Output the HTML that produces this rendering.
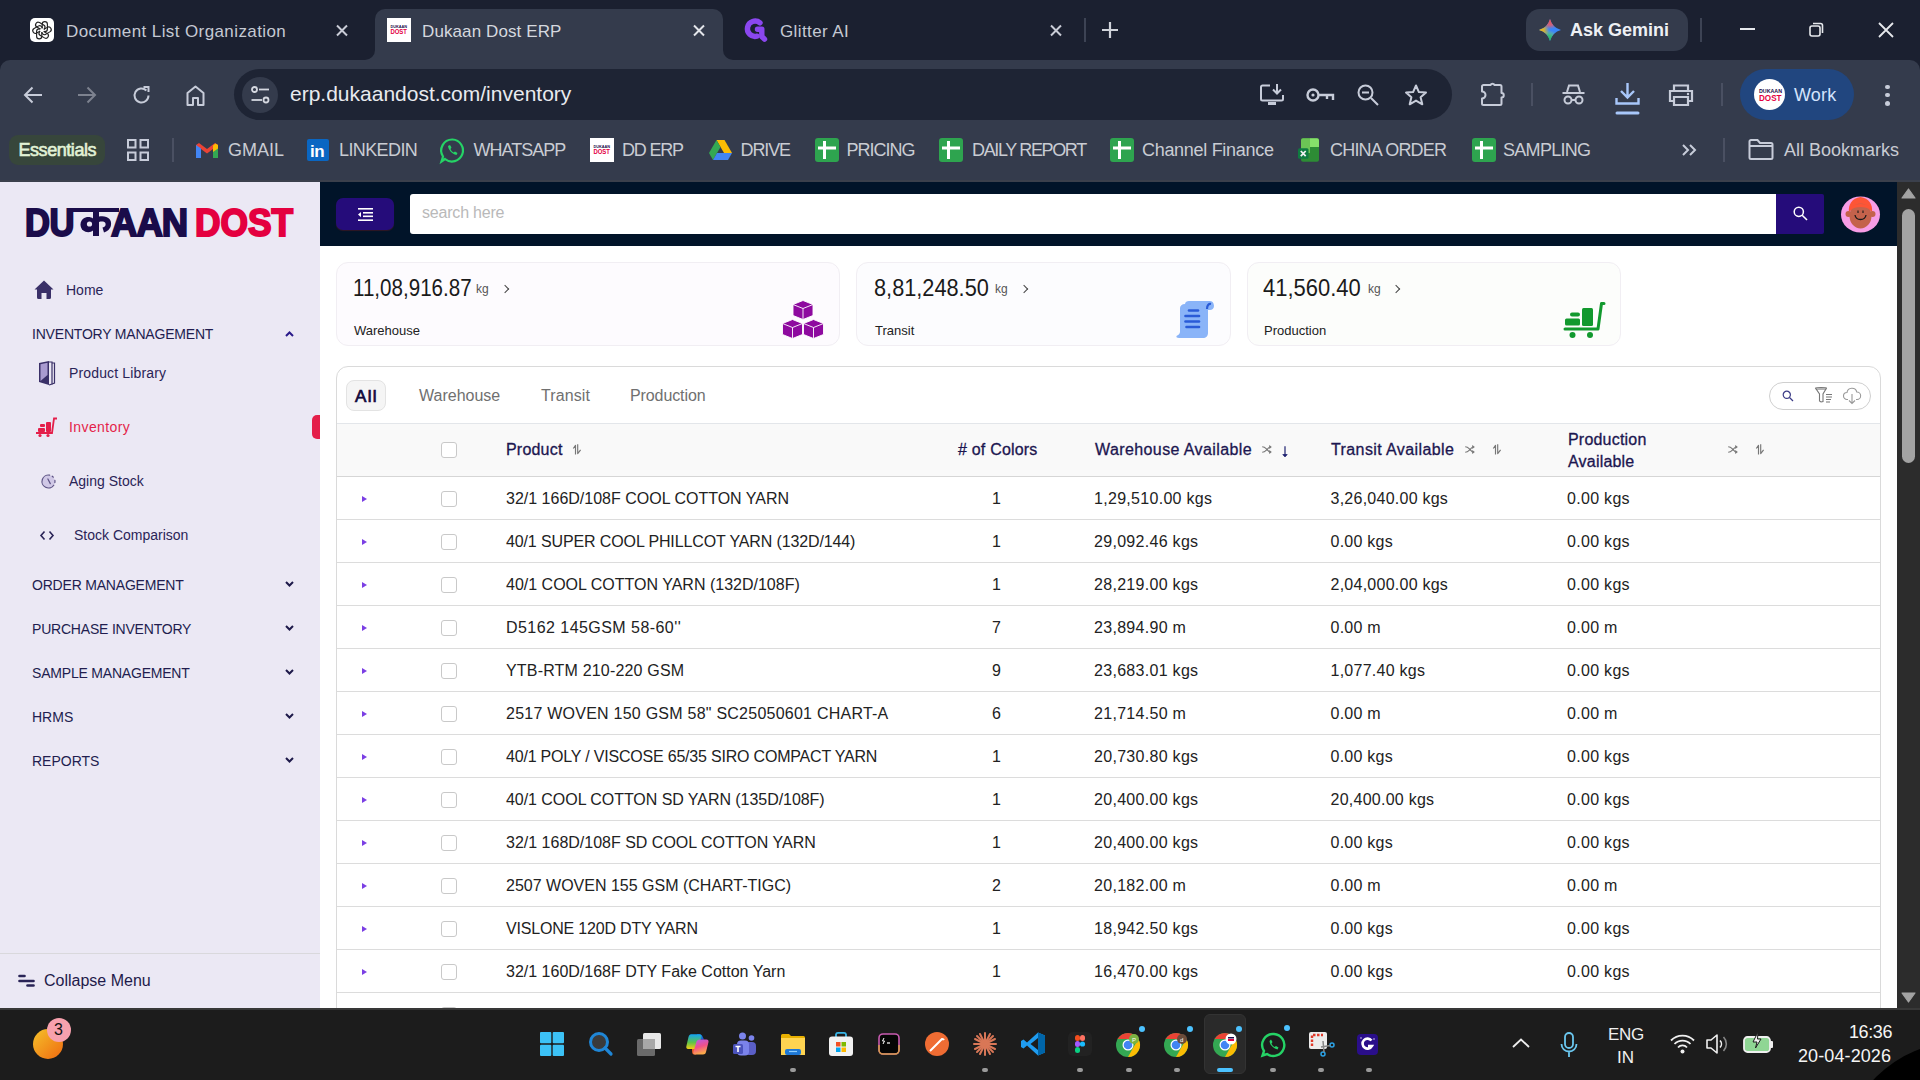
<!DOCTYPE html>
<html><head><meta charset="utf-8"><title>Dukaan Dost ERP</title>
<style>
*{box-sizing:border-box;margin:0;padding:0}
html,body{width:1920px;height:1080px;overflow:hidden;background:#1b2030;font-family:"Liberation Sans",sans-serif;position:relative}
.a{position:absolute}
.t{position:absolute;white-space:nowrap;line-height:1}
svg{position:absolute;overflow:visible}
.tab{color:#c5c9d3;font-size:17px;letter-spacing:0.4px}
.bm{color:#c9ccd3;font-size:18px;top:141px}
.sq{width:24px;height:24px;background:#2ea44f;border-radius:3px}
.nav{color:#2a2457;font-size:14px}
.sec{color:#221d4f;font-size:14px}
.chev{width:7px;height:7px;border-right:2px solid #1e1a4a;border-bottom:2px solid #1e1a4a;transform:rotate(45deg)}
.row{position:absolute;left:337px;width:1543px;height:43px;border-bottom:1px solid #dcdcdc;background:#fff}
.cell{position:absolute;top:14px;white-space:nowrap;line-height:1;font-size:16px;color:#222}
.cb{position:absolute;left:104px;top:14px;width:16px;height:16px;border:1px solid #c9c9c9;border-radius:3px;background:#fff}
.tri{position:absolute;left:25px;top:18.5px;width:0;height:0;border-left:5px solid #7b3fe4;border-top:3.5px solid transparent;border-bottom:3.5px solid transparent}
.th{position:absolute;white-space:nowrap;line-height:1;font-size:16px;color:#1c1650;-webkit-text-stroke:0.3px #1c1650;letter-spacing:0.2px}
.card{position:absolute;top:262px;height:84px;border:1px solid #f1eef3;border-radius:12px}
.num{position:absolute;top:277px;font-size:23px;color:#1a1a1a;white-space:nowrap;line-height:1}
.kg{position:absolute;top:283px;font-size:12px;color:#555;white-space:nowrap;line-height:1}
.lbl{position:absolute;top:324px;font-size:13px;color:#222;white-space:nowrap;line-height:1}
.arr{position:absolute;top:286px;width:6px;height:6px;border-right:1.6px solid #444;border-top:1.6px solid #444;transform:rotate(45deg)}
.tb{position:absolute;top:1032px;width:24px;height:24px}
.dot{position:absolute;top:1068px;width:6px;height:4px;border-radius:2px;background:#9a9a9a}
</style></head><body>

<!-- ================= BROWSER TAB STRIP ================= -->
<div class="a" style="left:0;top:0;width:1920px;height:60px;background:#1b2030"></div>
<!-- active tab -->
<div class="a" style="left:375px;top:9px;width:348px;height:52px;background:#343b4c;border-radius:10px 10px 0 0"></div>
<div class="a" style="left:365px;top:50px;width:10px;height:10px;background:#343b4c"></div>
<div class="a" style="left:355px;top:40px;width:20px;height:20px;background:#1b2030;border-radius:0 0 10px 0"></div>
<div class="a" style="left:723px;top:50px;width:10px;height:10px;background:#343b4c"></div>
<div class="a" style="left:723px;top:40px;width:20px;height:20px;background:#1b2030;border-radius:0 0 0 10px"></div>

<!-- tab 1 -->
<div class="a" style="left:30px;top:18px;width:24px;height:24px;background:#fff;border-radius:5px"></div>
<svg style="left:30px;top:18px" width="24" height="24" viewBox="0 0 24 24"><g transform="translate(12 12.2)" fill="none" stroke="#222" stroke-width="1.15"><rect x="0.2" y="-8.6" width="5.2" height="10" rx="2.6" transform="rotate(0)"/><rect x="0.2" y="-8.6" width="5.2" height="10" rx="2.6" transform="rotate(60)"/><rect x="0.2" y="-8.6" width="5.2" height="10" rx="2.6" transform="rotate(120)"/><rect x="0.2" y="-8.6" width="5.2" height="10" rx="2.6" transform="rotate(180)"/><rect x="0.2" y="-8.6" width="5.2" height="10" rx="2.6" transform="rotate(240)"/><rect x="0.2" y="-8.6" width="5.2" height="10" rx="2.6" transform="rotate(300)"/></g><circle cx="12" cy="12.2" r="2" fill="#fff"/></svg>
<div class="t tab" style="left:66px;top:23px">Document List Organization</div>
<svg style="left:336px;top:25px" width="12" height="11" viewBox="0 0 12 11"><path d="M1 0.5L11 10.5M11 0.5L1 10.5" stroke="#c9ccd6" stroke-width="2"/></svg>

<!-- tab 2 -->
<svg style="left:387px;top:18px" width="24" height="24" viewBox="0 0 24 24"><rect width="24" height="24" fill="#fff"/><text x="3.4" y="10.3" font-family="Liberation Sans" font-weight="bold" font-size="3.4" textLength="16.6" lengthAdjust="spacingAndGlyphs" fill="#1a0c4a">DUKAAN</text><text x="3.4" y="16.1" font-family="Liberation Sans" font-weight="bold" font-size="7" textLength="16.6" lengthAdjust="spacingAndGlyphs" fill="#e4003f">DOST</text></svg>
<div class="t tab" style="left:422px;top:23px;color:#d5d8df;letter-spacing:0.1px">Dukaan Dost ERP</div>
<svg style="left:693px;top:25px" width="12" height="11" viewBox="0 0 12 11"><path d="M1 0.5L11 10.5M11 0.5L1 10.5" stroke="#e3e5ea" stroke-width="2"/></svg>

<!-- tab 3 -->
<svg style="left:745px;top:18px" width="24" height="26" viewBox="0 0 24 26"><g fill="none" stroke="#8b47ef" stroke-width="5.4" stroke-linecap="round" stroke-linejoin="round"><path d="M15 4.8A7.7 7.7 0 1 0 12 18.2"/><path d="M12.5 11.2H16.8V18.5L19.5 21.2"/></g></svg>
<div class="t tab" style="left:780px;top:23px">Glitter AI</div>
<svg style="left:1050px;top:25px" width="12" height="11" viewBox="0 0 12 11"><path d="M1 0.5L11 10.5M11 0.5L1 10.5" stroke="#c9ccd6" stroke-width="2"/></svg>
<div class="a" style="left:1084px;top:18px;width:2px;height:24px;background:#3d4354"></div>
<svg style="left:1102px;top:22px" width="16" height="16" viewBox="0 0 16 16"><path d="M8 0V16M0 8H16" stroke="#d0d3da" stroke-width="2.2"/></svg>

<!-- Ask Gemini -->
<div class="a" style="left:1526px;top:9px;width:162px;height:42px;background:#343b4c;border-radius:14px"></div>
<svg style="left:1539px;top:19px" width="22" height="22" viewBox="0 0 24 24"><defs><radialGradient id="gr" cx="12" cy="0" r="11" gradientUnits="userSpaceOnUse"><stop offset="0" stop-color="#f44b4b"/><stop offset="0.6" stop-color="#f25a5a" stop-opacity="0.8"/><stop offset="1" stop-color="#f25a5a" stop-opacity="0"/></radialGradient><radialGradient id="gy" cx="0" cy="12" r="11" gradientUnits="userSpaceOnUse"><stop offset="0" stop-color="#fbbc04"/><stop offset="0.5" stop-color="#fbbc04" stop-opacity="0.8"/><stop offset="1" stop-color="#fbbc04" stop-opacity="0"/></radialGradient><radialGradient id="gn" cx="10" cy="24" r="12" gradientUnits="userSpaceOnUse"><stop offset="0" stop-color="#1eb35a"/><stop offset="0.5" stop-color="#34c759" stop-opacity="0.8"/><stop offset="1" stop-color="#a8e05a" stop-opacity="0"/></radialGradient></defs><path id="gst" d="M12 0Q14.6 9.4 24 12Q14.6 14.6 12 24Q9.4 14.6 0 12Q9.4 9.4 12 0Z" fill="#3b86f7"/><path d="M12 0Q14.6 9.4 24 12Q14.6 14.6 12 24Q9.4 14.6 0 12Q9.4 9.4 12 0Z" fill="url(#gn)"/><path d="M12 0Q14.6 9.4 24 12Q14.6 14.6 12 24Q9.4 14.6 0 12Q9.4 9.4 12 0Z" fill="url(#gy)"/><path d="M12 0Q14.6 9.4 24 12Q14.6 14.6 12 24Q9.4 14.6 0 12Q9.4 9.4 12 0Z" fill="url(#gr)"/></svg>
<div class="t" style="left:1570px;top:20.5px;font-size:18px;font-weight:bold;color:#eef0f4">Ask Gemini</div>
<div class="a" style="left:1700px;top:18px;width:2px;height:24px;background:#3d4354"></div>
<!-- window controls -->
<div class="a" style="left:1740px;top:28px;width:15px;height:2px;background:#e6e8ec"></div>
<svg style="left:1809px;top:22px" width="15" height="15" viewBox="0 0 15 15"><rect x="1" y="4" width="10" height="10" rx="2" fill="none" stroke="#e6e8ec" stroke-width="1.6"/><path d="M4 1.5H11.5A2 2 0 0 1 13.5 3.5V11" fill="none" stroke="#e6e8ec" stroke-width="1.6"/></svg>
<svg style="left:1878px;top:22px" width="16" height="16" viewBox="0 0 16 16"><path d="M1 1L15 15M15 1L1 15" stroke="#e6e8ec" stroke-width="1.8"/></svg>

<!-- ================= TOOLBAR ================= -->
<div class="a" style="left:0;top:60px;width:1920px;height:121px;background:#343b4c;border-radius:10px 10px 0 0"></div>
<div class="a" style="left:0;top:180px;width:1920px;height:2px;background:#3b404c"></div>
<!-- nav icons -->
<svg style="left:23px;top:86px" width="20" height="18" viewBox="0 0 20 18"><path d="M19 9H2M9.5 1.5L2 9L9.5 16.5" fill="none" stroke="#c7ccd9" stroke-width="2"/></svg>
<svg style="left:77px;top:86px" width="20" height="18" viewBox="0 0 20 18"><path d="M1 9H18M10.5 1.5L18 9L10.5 16.5" fill="none" stroke="#7d828f" stroke-width="2"/></svg>
<svg style="left:132px;top:86px" width="19" height="19" viewBox="0 0 19 19"><path d="M16.5 9.5A7 7 0 1 1 14.4 4.5" fill="none" stroke="#c7ccd9" stroke-width="2"/><path d="M11.5 1H16.5V6" fill="none" stroke="#c7ccd9" stroke-width="2"/></svg>
<svg style="left:186px;top:85px" width="19" height="21" viewBox="0 0 19 21"><path d="M1.5 20V8L9.5 1.5L17.5 8V20H12V13H7V20Z" fill="none" stroke="#c7ccd9" stroke-width="2" stroke-linejoin="round"/></svg>
<!-- url bar -->
<div class="a" style="left:234px;top:69px;width:1218px;height:51px;background:#1e2434;border-radius:26px"></div>
<div class="a" style="left:242px;top:77px;width:36px;height:36px;background:#343b4c;border-radius:18px"></div>
<svg style="left:251px;top:86px" width="19" height="18" viewBox="0 0 19 18"><g fill="none" stroke="#d5d8e0" stroke-width="1.8"><circle cx="3.5" cy="3.5" r="2.5"/><path d="M8 3.5H18"/><circle cx="15" cy="14" r="2.5"/><path d="M0.5 14H11"/></g></svg>
<div class="t" style="left:290px;top:83px;font-size:21px;color:#e9ebef">erp.dukaandost.com/inventory</div>
<!-- right icons in url bar -->
<svg style="left:1260px;top:84px" width="24" height="22" viewBox="0 0 24 22"><path d="M10 1.5H2.5A1.5 1.5 0 0 0 1 3V15A1.5 1.5 0 0 0 2.5 16.5H21.5A1.5 1.5 0 0 0 23 15V11" fill="none" stroke="#c7ccd9" stroke-width="2"/><path d="M17 0V9M13 5.5L17 9.5L21 5.5" fill="none" stroke="#c7ccd9" stroke-width="2"/><path d="M8 19.5H16" stroke="#c7ccd9" stroke-width="3"/></svg>
<svg style="left:1306px;top:86px" width="28" height="18" viewBox="0 0 28 18"><circle cx="7" cy="9" r="5.5" fill="none" stroke="#c7ccd9" stroke-width="2.4"/><circle cx="7" cy="9" r="1.6" fill="#c7ccd9"/><path d="M12.5 9H27V14M21 9V13" fill="none" stroke="#c7ccd9" stroke-width="2.4"/></svg>
<svg style="left:1357px;top:84px" width="22" height="22" viewBox="0 0 22 22"><circle cx="8.5" cy="8.5" r="7" fill="none" stroke="#c7ccd9" stroke-width="2"/><path d="M14 14L21 21M5 8.5H12" stroke="#c7ccd9" stroke-width="2"/></svg>
<svg style="left:1404px;top:84px" width="24" height="22" viewBox="0 0 24 22"><path d="M12 1.5L14.9 8.1L22 8.6L16.6 13.3L18.3 20.3L12 16.6L5.7 20.3L7.4 13.3L2 8.6L9.1 8.1Z" fill="none" stroke="#c7ccd9" stroke-width="2" stroke-linejoin="round"/></svg>
<!-- toolbar right -->
<svg style="left:1481px;top:81px" width="25" height="26" viewBox="0 0 25 26"><path d="M2.5 4H9.5A2.2 2.2 0 0 1 13.5 4H19A1.5 1.5 0 0 1 20.5 5.5V12A2.2 2.2 0 0 1 20.5 16.5V22.5A1.5 1.5 0 0 1 19 24H2.5A1.5 1.5 0 0 1 1 22.5V17.5A3.5 3.5 0 0 0 1 10.5V5.5A1.5 1.5 0 0 1 2.5 4Z" fill="none" stroke="#c7ccd9" stroke-width="2" stroke-linejoin="round"/></svg>
<div class="a" style="left:1531px;top:83px;width:2px;height:23px;background:#4a5062"></div>
<svg style="left:1562px;top:84px" width="23" height="21" viewBox="0 0 23 21"><g fill="none" stroke="#c7ccd9" stroke-width="2"><path d="M5 8L7 1.5H16L18 8"/><path d="M0.5 9H22.5"/><circle cx="6" cy="16" r="3.5"/><circle cx="17" cy="16" r="3.5"/><path d="M9.5 16H13.5"/></g></svg>
<svg style="left:1615px;top:82px" width="25" height="34" viewBox="0 0 25 34"><g fill="none" stroke="#a8c7fa" stroke-width="2.4"><path d="M12.5 1V15M6 9L12.5 15.5L19 9"/><path d="M1.5 16V21.5H23.5V16"/></g><path d="M2 31H23" stroke="#a8c7fa" stroke-width="3" stroke-linecap="round"/></svg>
<svg style="left:1668px;top:84px" width="26" height="22" viewBox="0 0 26 22"><g fill="none" stroke="#c7ccd9" stroke-width="2.2"><path d="M6 6V1.5H20V6"/><path d="M6 17H2V7H24V17H20"/><path d="M6 13H20V21H6Z"/></g><circle cx="20" cy="10" r="1.2" fill="#c7ccd9"/></svg>
<div class="a" style="left:1721px;top:83px;width:2px;height:23px;background:#4a5062"></div>
<!-- work pill -->
<div class="a" style="left:1740px;top:69px;width:114px;height:51px;background:#21467f;border-radius:26px"></div>
<svg style="left:1754px;top:79px" width="31" height="31" viewBox="0 0 31 31"><circle cx="15.5" cy="15.5" r="15.5" fill="#fff"/><text x="5" y="14" font-family="Liberation Sans" font-weight="bold" font-size="4.6" textLength="23" lengthAdjust="spacingAndGlyphs" fill="#1a0c4a">DUKAAN</text><text x="5" y="21.8" font-family="Liberation Sans" font-weight="bold" font-size="9" textLength="22.5" lengthAdjust="spacingAndGlyphs" fill="#e4003f">DOST</text></svg>
<div class="t" style="left:1794px;top:85.5px;font-size:18px;color:#d3e3fd;letter-spacing:0.2px">Work</div>
<div class="a" style="left:1885px;top:84.5px;width:4.5px;height:4.5px;background:#c7ccd9;border-radius:3px"></div>
<div class="a" style="left:1885px;top:92.8px;width:4.5px;height:4.5px;background:#c7ccd9;border-radius:3px"></div>
<div class="a" style="left:1885px;top:101.1px;width:4.5px;height:4.5px;background:#c7ccd9;border-radius:3px"></div>

<!-- ================= BOOKMARKS ================= -->
<div class="a" style="left:9px;top:135px;width:96px;height:30px;background:#37463b;border-radius:9px"></div>
<div class="t" style="left:18.5px;top:140.5px;font-size:18px;color:#e2f2d6;-webkit-text-stroke:0.6px #e2f2d6;letter-spacing:-0.45px">Essentials</div>
<svg style="left:127px;top:139px" width="22" height="22" viewBox="0 0 22 22"><g fill="none" stroke="#c7ccd9" stroke-width="2"><rect x="1" y="1" width="7.5" height="7.5"/><rect x="13.5" y="1" width="7.5" height="7.5"/><rect x="1" y="13.5" width="7.5" height="7.5"/><rect x="13.5" y="13.5" width="7.5" height="7.5"/></g></svg>
<div class="a" style="left:172px;top:138px;width:2px;height:24px;background:#4a5062"></div>
<!-- gmail -->
<svg style="left:196px;top:142px" width="22" height="17" viewBox="0 0 22 17"><path d="M0 3V16H5V7L11 11.5L17 7V16H22V3L19 1L11 7L3 1Z" fill="#ea4335"/><path d="M0 3V16H5V6.5Z" fill="#4285f4"/><path d="M22 3V16H17V6.5Z" fill="#34a853"/><path d="M17 3.5L19.5 1.5L22 3V6.5L17 10Z" fill="#fbbc04"/></svg>
<div class="t bm" style="left:228px;letter-spacing:0px">GMAIL</div>
<div class="a" style="left:307px;top:139px;width:22px;height:22px;background:#0a66c2;border-radius:2px"></div>
<div class="t" style="left:310px;top:143px;font-size:17px;font-weight:bold;color:#fff;letter-spacing:-0.5px">in</div>
<div class="t bm" style="left:339px;letter-spacing:-0.6px">LINKEDIN</div>
<svg style="left:440px;top:138px" width="25" height="25" viewBox="0 0 25 25"><path d="M12.5 1.5A11 11 0 1 1 5 21L1.5 23.5L3 18.5A11 11 0 0 1 12.5 1.5Z" fill="none" stroke="#25d366" stroke-width="2.2"/><path d="M8 8C8.5 12 12 16 16.5 17L17.5 15L15 13.5L13.5 14.5C12 13.5 11 12.5 10.5 11L11.5 9.5L10 7L8 8Z" fill="#25d366"/></svg>
<div class="t bm" style="left:473.5px;letter-spacing:-1px">WHATSAPP</div>
<svg style="left:590px;top:138px" width="24" height="24" viewBox="0 0 24 24"><rect width="24" height="24" fill="#fff"/><text x="3.4" y="10.3" font-family="Liberation Sans" font-weight="bold" font-size="3.4" textLength="16.6" lengthAdjust="spacingAndGlyphs" fill="#1a0c4a">DUKAAN</text><text x="3.4" y="16.1" font-family="Liberation Sans" font-weight="bold" font-size="7" textLength="16.6" lengthAdjust="spacingAndGlyphs" fill="#e4003f">DOST</text></svg>
<div class="t bm" style="left:622px;letter-spacing:-1.2px">DD ERP</div>
<svg style="left:709px;top:140px" width="23" height="20" viewBox="0 0 23 20"><path d="M7.5 0H15.5L23 13H15Z" fill="#fbbc04"/><path d="M7.5 0L0 13L4 20L11.5 7Z" fill="#34a853"/><path d="M4 20H19L23 13H8Z" fill="#4285f4"/></svg>
<div class="t bm" style="left:740.5px;letter-spacing:-1.1px">DRIVE</div>
<div class="a sq" style="left:815px;top:138px"></div><svg style="left:815px;top:138px" width="24" height="24" viewBox="0 0 24 24"><path d="M9.5 3V21M3 10H21" stroke="#fff" stroke-width="3"/></svg>
<div class="t bm" style="left:846.5px;letter-spacing:-1px">PRICING</div>
<div class="a sq" style="left:939px;top:138px"></div><svg style="left:939px;top:138px" width="24" height="24" viewBox="0 0 24 24"><path d="M9.5 3V21M3 10H21" stroke="#fff" stroke-width="3"/></svg>
<div class="t bm" style="left:972px;letter-spacing:-1.35px">DAILY REPORT</div>
<div class="a sq" style="left:1110px;top:138px"></div><svg style="left:1110px;top:138px" width="24" height="24" viewBox="0 0 24 24"><path d="M9.5 3V21M3 10H21" stroke="#fff" stroke-width="3"/></svg>
<div class="t bm" style="left:1142px;letter-spacing:-0.3px">Channel Finance</div>
<svg style="left:1297px;top:138px" width="24" height="24" viewBox="0 0 24 24"><rect x="4" y="0.2" width="18" height="23.5" rx="2" fill="#2d8c35"/><path d="M6 0.2H13V15H4V2.2A2 2 0 0 1 6 0.2Z" fill="#6cc455"/><path d="M13 0.2H20A2 2 0 0 1 22 2.2V9H13Z" fill="#86e06a"/><rect x="1" y="10.3" width="10.5" height="10.5" rx="1.5" fill="#0f7b40"/><path d="M3.8 13L8.7 18.2M8.7 13L3.8 18.2" stroke="#f0f0f0" stroke-width="1.8"/></svg>
<div class="t bm" style="left:1330px;letter-spacing:-0.8px">CHINA ORDER</div>
<div class="a sq" style="left:1472px;top:138px"></div><svg style="left:1472px;top:138px" width="24" height="24" viewBox="0 0 24 24"><path d="M9.5 3V21M3 10H21" stroke="#fff" stroke-width="3"/></svg>
<div class="t bm" style="left:1503px;letter-spacing:-0.7px">SAMPLING</div>
<svg style="left:1682px;top:144px" width="14" height="12" viewBox="0 0 14 12"><path d="M1 1L6 6L1 11M8 1L13 6L8 11" fill="none" stroke="#c7ccd9" stroke-width="2"/></svg>
<div class="a" style="left:1723px;top:138px;width:2px;height:24px;background:#4a5062"></div>
<svg style="left:1748px;top:139px" width="26" height="21" viewBox="0 0 26 21"><path d="M1.5 2.5A1.5 1.5 0 0 1 3 1H9.5L12 4H23A1.5 1.5 0 0 1 24.5 5.5V18.5A1.5 1.5 0 0 1 23 20H3A1.5 1.5 0 0 1 1.5 18.5Z" fill="none" stroke="#c7ccd9" stroke-width="2"/><path d="M1.5 7H24.5" stroke="#c7ccd9" stroke-width="2"/></svg>
<div class="t bm" style="left:1784px;letter-spacing:0px">All Bookmarks</div>

<!-- ================= SIDEBAR ================= -->
<div class="a" style="left:0;top:182px;width:320px;height:826px;background:#ebe8f4"></div>
<!-- logo -->
<div class="t" style="left:25px;top:203.5px;font-size:38.4px;font-weight:bold;color:#1a0c4a;transform:scaleX(0.9);transform-origin:0 0;-webkit-text-stroke:2px #1a0c4a;letter-spacing:-0.5px">DU</div>
<svg style="left:69px;top:208px" width="50" height="28" viewBox="0 0 50 28"><g fill="#1a0c4a"><rect x="0" y="0" width="50" height="4"/><rect x="24" y="0" width="6" height="28"/><path d="M24 10.5C21 8 12 8 11.5 16.5C11.5 24 20 26 24 22.5Z"/><path d="M30 8.5C38 7 43 11 42 17C41.5 21 38 23.5 35 24.5L33.5 19.5C36 19 37 17.5 36.5 15.5C36 13.5 33 13 30 14Z"/></g><circle cx="20.5" cy="16" r="2.6" fill="#ebe8f4"/></svg>
<div class="t" style="left:111px;top:203.5px;font-size:38.4px;font-weight:bold;color:#1a0c4a;transform:scaleX(0.95);transform-origin:0 0;-webkit-text-stroke:2px #1a0c4a;letter-spacing:-1px">AAN</div>
<div class="t" style="left:195px;top:203.5px;font-size:38.4px;font-weight:bold;color:#e4003f;transform:scaleX(0.92);transform-origin:0 0;-webkit-text-stroke:2px #e4003f;letter-spacing:0px">DOST</div>

<!-- home -->
<svg style="left:34px;top:280px" width="20" height="19" viewBox="0 0 20 19"><path d="M10 0.5L19.5 9.5H17V17.5A1.5 1.5 0 0 1 15.5 19H12.5V13H7.5V19H4.5A1.5 1.5 0 0 1 3 17.5V9.5H0.5Z" fill="#3a3068"/></svg>
<div class="t nav" style="left:66px;top:283px">Home</div>
<div class="t sec" style="left:32px;top:327px;letter-spacing:-0.2px">INVENTORY MANAGEMENT</div>
<svg style="left:285px;top:331px" width="9" height="6" viewBox="0 0 9 6"><path d="M1 5L4.5 1.5L8 5" fill="none" stroke="#2a1a8a" stroke-width="2"/></svg>
<!-- product library -->
<svg style="left:38px;top:361px" width="18" height="25" viewBox="0 0 18 25"><path d="M1 2L11 0V24L1 21Z" fill="#3a3068"/><path d="M2.5 3.2L9.5 1.8V14L2.5 20Z" fill="#a99bd0"/><path d="M11 1H14V23L11 24" fill="none" stroke="#3a3068" stroke-width="1.2"/><path d="M14 2H16.5V22L14 23" fill="none" stroke="#3a3068" stroke-width="1.2"/></svg>
<div class="t nav" style="left:69px;top:366px;letter-spacing:0.15px">Product Library</div>
<!-- inventory active -->
<svg style="left:36px;top:417px" width="21" height="20" viewBox="0 0 21 20"><g fill="#e41f4a"><rect x="4" y="7" width="5" height="3" rx="1"/><rect x="2" y="11" width="7" height="4" rx="1"/><rect x="10" y="5" width="5" height="10" rx="1"/><path d="M0 16H16L18 1.5H21" fill="none" stroke="#e41f4a" stroke-width="1.8"/><circle cx="4" cy="18.5" r="1.6"/><circle cx="12" cy="18.5" r="1.6"/></g></svg>
<div class="t nav" style="left:69px;top:420px;color:#e41f4a;letter-spacing:0.4px">Inventory</div>
<div class="a" style="left:312px;top:415px;width:8px;height:24px;background:#e41f4a;border-radius:5px 0 0 5px"></div>
<!-- aging stock -->
<svg style="left:41px;top:474px" width="15" height="15" viewBox="0 0 15 15"><circle cx="7.5" cy="7.5" r="6.3" fill="#d0c8e6"/><g fill="none" stroke="#5c5284" stroke-width="1.2" stroke-linecap="round"><path d="M8.63 1.1A6.5 6.5 0 1 0 12.82 11.23"/><path d="M11.23 2.18A6.5 6.5 0 0 1 12.3 3.2"/><path d="M13.9 6.37A6.5 6.5 0 0 1 13.85 8.7"/><path d="M6.9 5L9.3 9.6"/></g></svg>
<div class="t nav" style="left:69px;top:474px">Aging Stock</div>
<svg style="left:40px;top:531px" width="14" height="9" viewBox="0 0 14 9"><path d="M4.5 0.5L1 4.5L4.5 8.5M9.5 0.5L13 4.5L9.5 8.5" fill="none" stroke="#2a2457" stroke-width="1.6"/></svg>
<div class="t nav" style="left:74px;top:528px">Stock Comparison</div>

<div class="t sec" style="left:32px;top:578px;letter-spacing:-0.2px">ORDER MANAGEMENT</div>
<svg style="left:285px;top:581px" width="9" height="6" viewBox="0 0 9 6"><path d="M1 1L4.5 4.5L8 1" fill="none" stroke="#1e1a4a" stroke-width="2"/></svg>
<div class="t sec" style="left:32px;top:622px;letter-spacing:-0.2px">PURCHASE INVENTORY</div>
<svg style="left:285px;top:625px" width="9" height="6" viewBox="0 0 9 6"><path d="M1 1L4.5 4.5L8 1" fill="none" stroke="#1e1a4a" stroke-width="2"/></svg>
<div class="t sec" style="left:32px;top:666px;letter-spacing:-0.2px">SAMPLE MANAGEMENT</div>
<svg style="left:285px;top:669px" width="9" height="6" viewBox="0 0 9 6"><path d="M1 1L4.5 4.5L8 1" fill="none" stroke="#1e1a4a" stroke-width="2"/></svg>
<div class="t sec" style="left:32px;top:710px">HRMS</div>
<svg style="left:285px;top:713px" width="9" height="6" viewBox="0 0 9 6"><path d="M1 1L4.5 4.5L8 1" fill="none" stroke="#1e1a4a" stroke-width="2"/></svg>
<div class="t sec" style="left:32px;top:754px">REPORTS</div>
<svg style="left:285px;top:757px" width="9" height="6" viewBox="0 0 9 6"><path d="M1 1L4.5 4.5L8 1" fill="none" stroke="#1e1a4a" stroke-width="2"/></svg>

<div class="a" style="left:0;top:953px;width:320px;height:1px;background:#d9d8dc"></div>
<svg style="left:18px;top:974px" width="17" height="13" viewBox="0 0 17 13"><g stroke="#2a2457" stroke-width="2.6" stroke-linecap="round"><path d="M1.5 2H6.5"/><path d="M1.5 7H15.5"/><path d="M9.5 11.5H15.5"/></g></svg>
<div class="t" style="left:44px;top:973px;font-size:16px;color:#1e1a4a">Collapse Menu</div>

<!-- ================= APP HEADER ================= -->
<div class="a" style="left:320px;top:182px;width:1577px;height:64px;background:#011429"></div>
<div class="a" style="left:336px;top:198px;width:58px;height:32px;background:#250c7a;border-radius:7px;box-shadow:0 1px 1px rgba(120,30,30,0.4)"></div>
<svg style="left:358px;top:208px" width="15" height="13" viewBox="0 0 15 13"><g fill="#fff"><rect x="0" y="0" width="15" height="1.6"/><rect x="5" y="4" width="10" height="1.6"/><rect x="5" y="7.5" width="10" height="1.6"/><rect x="0" y="11.4" width="15" height="1.6"/><path d="M0 6.6L3 4V9.2Z"/></g></svg>
<div class="a" style="left:410px;top:194px;width:1366px;height:40px;background:#fff;border-radius:3px 0 0 3px"></div>
<div class="t" style="left:422px;top:205px;font-size:16px;color:#b9b9b9;letter-spacing:-0.2px">search here</div>
<div class="a" style="left:1776px;top:194px;width:48px;height:40px;background:#250c7a;border-radius:0 2px 2px 0"></div>
<svg style="left:1793px;top:206px" width="15" height="15" viewBox="0 0 15 15"><circle cx="5.8" cy="5.8" r="4.6" fill="none" stroke="#fff" stroke-width="1.5"/><path d="M9.2 9.2L14 14" stroke="#fff" stroke-width="1.6"/></svg>
<!-- avatar -->
<svg style="left:1841px;top:196px" width="39" height="37" viewBox="0 0 39 37"><ellipse cx="19.5" cy="18.5" rx="19.5" ry="18" fill="#f79de6"/><path d="M8 16C7 9 11 2 19.5 1C28 2 32 9 31 16C29 12 10 12 8 16Z" fill="#fd5536"/><ellipse cx="19.5" cy="20" rx="11" ry="12.5" fill="#c4624b"/><path d="M10 11C13 7 26 7 29 11L29 14C26 10 13 10 10 14Z" fill="#fd5536"/><circle cx="7.5" cy="18" r="3" fill="#c4624b"/><circle cx="31.5" cy="18" r="3" fill="#c4624b"/><path d="M14 19C15 25 24 25 25 19" fill="none" stroke="#1a1a1a" stroke-width="1.3"/><path d="M17 14.5V17M22 14.5V17" stroke="#1a1a1a" stroke-width="1.1"/></svg>

<!-- scrollbar -->
<div class="a" style="left:1897px;top:182px;width:23px;height:826px;background:#2c2c2c"></div>
<svg style="left:1901px;top:188px" width="15" height="11" viewBox="0 0 15 11"><path d="M7.5 1L14 10H1Z" fill="#a3a3a3" stroke="#a3a3a3" stroke-width="1.2" stroke-linejoin="round"/></svg>
<div class="a" style="left:1902px;top:209px;width:13px;height:254px;background:#a3a3a3;border-radius:7px"></div>
<svg style="left:1901px;top:992px" width="15" height="11" viewBox="0 0 15 11"><path d="M7.5 10L14 1H1Z" fill="#a3a3a3" stroke="#a3a3a3" stroke-width="1.2" stroke-linejoin="round"/></svg>

<!-- ================= CONTENT ================= -->
<div class="a" style="left:320px;top:246px;width:1577px;height:762px;background:#fff"></div>

<!-- cards -->
<div class="card" style="left:336px;width:504px;background:#fdfbfe"></div>
<div class="t num" style="left:353px;transform:scaleX(0.895);transform-origin:0 0">11,08,916.87</div>
<div class="t kg" style="left:476px">kg</div>
<div class="arr" style="left:502px"></div>
<div class="t lbl" style="left:354px">Warehouse</div>
<svg style="left:782px;top:300px" width="42" height="40" viewBox="0 0 42 40"><g fill="#8e0a9f" stroke="#fff" stroke-width="0.9"><path d="M21 0.5L31 4.5V15.5L21 19.5L11 15.5V4.5Z"/><path d="M10.5 19.5L20.5 23.5V34.5L10.5 38.5L0.5 34.5V23.5Z"/><path d="M31.5 19.5L41.5 23.5V34.5L31.5 38.5L21.5 34.5V23.5Z"/></g><g fill="none" stroke="#fff" stroke-width="0.9"><path d="M11 4.5L21 8.5L31 4.5M21 8.5V19.5"/><path d="M0.5 23.5L10.5 27.5L20.5 23.5M10.5 27.5V38.5"/><path d="M21.5 23.5L31.5 27.5L41.5 23.5M31.5 27.5V38.5"/></g></svg>

<div class="card" style="left:856px;width:375px;background:#fcfcfe"></div>
<div class="t num" style="left:874px;transform:scaleX(0.945);transform-origin:0 0">8,81,248.50</div>
<div class="t kg" style="left:995px">kg</div>
<div class="arr" style="left:1021px"></div>
<div class="t lbl" style="left:875px">Transit</div>
<svg style="left:1176px;top:301px" width="38" height="38" viewBox="0 0 38 38"><path d="M9 3C9 1 11 0 13 0H34C37 0 38 3 38 5C38 7.5 36 9 34 9H32V32C32 35 30 37 27 37H3C1 37 0 36 0.5 35C2 34 4 33 4 31V7C4 5 6 3 9 3Z" fill="#8ab4f8"/><path d="M31 8C31 4 33 2.5 35 3" fill="none" stroke="#2a5bd7" stroke-width="2.2"/><g stroke="#2a5bd7" stroke-width="2.6" stroke-linecap="round"><path d="M13 9.5H22"/><path d="M9.5 15H23"/><path d="M9.5 20.5H23"/><path d="M10.5 26H23"/></g></svg>

<div class="card" style="left:1247px;width:374px;background:#fcfdfb"></div>
<div class="t num" style="left:1263px;transform:scaleX(0.955);transform-origin:0 0">41,560.40</div>
<div class="t kg" style="left:1368px">kg</div>
<div class="arr" style="left:1393px"></div>
<div class="t lbl" style="left:1264px">Production</div>
<svg style="left:1564px;top:301px" width="41" height="38" viewBox="0 0 41 38"><g fill="#12992e"><rect x="6" y="11.5" width="10" height="4" rx="2"/><rect x="1" y="17.5" width="15" height="7" rx="1.5"/><rect x="18" y="7" width="11" height="18" rx="1.5"/><circle cx="8.5" cy="34" r="3"/><circle cx="26" cy="34" r="3"/></g><path d="M1 28H34L37.5 2.5H40" fill="none" stroke="#12992e" stroke-width="3" stroke-linecap="round" stroke-linejoin="round"/></svg>

<!-- table container -->
<div class="a" style="left:336px;top:366px;width:1545px;height:700px;border:1.5px solid #dadada;border-radius:12px;background:#fff"></div>
<div class="a" style="left:346px;top:380px;width:40px;height:31px;background:#f5f5f5;border:1px solid #e3e3e3;border-radius:8px"></div>
<div class="t" style="left:355px;top:388px;font-size:17px;color:#12093d;-webkit-text-stroke:0.7px #12093d;letter-spacing:1.3px">All</div>
<div class="t" style="left:419px;top:388px;font-size:16px;color:#707070">Warehouse</div>
<div class="t" style="left:541px;top:388px;font-size:16px;color:#707070;letter-spacing:0.1px">Transit</div>
<div class="t" style="left:630px;top:388px;font-size:16px;color:#707070;letter-spacing:-0.1px">Production</div>
<div class="a" style="left:1769px;top:382px;width:102px;height:28px;border:1px solid #cfcfcf;border-radius:14px"></div>
<svg style="left:1782px;top:390px" width="12" height="12" viewBox="0 0 12 12"><circle cx="4.8" cy="4.8" r="3.6" fill="none" stroke="#3b3b86" stroke-width="1.2"/><path d="M7.5 7.5L11 11" stroke="#3b3b86" stroke-width="1.3"/></svg>
<svg style="left:1815px;top:387px" width="18" height="16" viewBox="0 0 18 16"><g fill="none" stroke="#777" stroke-width="1.1"><path d="M0.5 1C0.5 0.5 11.5 0.5 11.5 1L8 7V14.5L6 15L4.5 14V7Z"/><path d="M0.8 2H11.2"/><path d="M11 7.5H17M11 10H17M11 12.5H16M11 15H15"/></g></svg>
<svg style="left:1843px;top:387px" width="18" height="17" viewBox="0 0 18 17"><path d="M5 12.5H4A3.5 3.5 0 0 1 4 5.5A5 5 0 0 1 13.8 5A3.7 3.7 0 0 1 14 12.5H13" fill="none" stroke="#999" stroke-width="1.1"/><path d="M9 7V16.5M6 13.5L9 16.5L12 13.5" fill="none" stroke="#999" stroke-width="1.1"/></svg>
<div class="a" style="left:337px;top:423px;width:1543px;height:1px;background:#e3e6ea"></div>
<!-- header row -->
<div class="a" style="left:337px;top:424px;width:1543px;height:53px;background:#f9f9f9;border-bottom:1px solid #d6d6d6"></div>
<div class="cb" style="left:441px;top:442px"></div>
<div class="th" style="left:506px;top:441.5px">Product</div>
<svg style="left:573px;top:443px" width="9" height="13" viewBox="0 0 9 13"><path d="M2.5 11.5V2.3L0.3 5.5M4.7 1.2V10.6L7.6 6.9" fill="none" stroke="#777" stroke-width="1.15" stroke-linejoin="round"/></svg>
<div class="th" style="left:958px;top:441.5px">&#35; of Colors</div>
<div class="th" style="left:1095px;top:441.5px;letter-spacing:0.4px">Warehouse Available</div>
<svg style="left:1261px;top:445px" width="11" height="9" viewBox="0 0 11 9"><g fill="none" stroke="#777" stroke-width="1.1"><path d="M1.2 1.8C3.8 1.8 4.5 3 6 4.5C7.5 6 8 7 9 7"/><path d="M1.2 7.2C3.8 7.2 4.5 6 6 4.5C7.5 3 8 2 9 2"/></g><g fill="#777"><path d="M8.2 0.1L10.9 2L8.2 3.9Z"/><path d="M8.2 5.1L10.9 7L8.2 8.9Z"/></g></svg>
<svg style="left:1282px;top:445.5px" width="6" height="12" viewBox="0 0 6 12"><path d="M3 0.3V10.5" stroke="#1d2070" stroke-width="1.2"/><path d="M0.8 8.6L3 10.8L5.2 8.6Z" fill="#1d2070" stroke="#1d2070" stroke-width="0.8" stroke-linejoin="round"/></svg>
<div class="th" style="left:1331px;top:441.5px;letter-spacing:0.4px">Transit Available</div>
<svg style="left:1464px;top:445px" width="11" height="9" viewBox="0 0 11 9"><g fill="none" stroke="#777" stroke-width="1.1"><path d="M1.2 1.8C3.8 1.8 4.5 3 6 4.5C7.5 6 8 7 9 7"/><path d="M1.2 7.2C3.8 7.2 4.5 6 6 4.5C7.5 3 8 2 9 2"/></g><g fill="#777"><path d="M8.2 0.1L10.9 2L8.2 3.9Z"/><path d="M8.2 5.1L10.9 7L8.2 8.9Z"/></g></svg>
<svg style="left:1493px;top:443px" width="9" height="13" viewBox="0 0 9 13"><path d="M2.5 11.5V2.3L0.3 5.5M4.7 1.2V10.6L7.6 6.9" fill="none" stroke="#777" stroke-width="1.15" stroke-linejoin="round"/></svg>
<div class="th" style="left:1568px;top:428.5px;line-height:22px">Production<br>Available</div>
<svg style="left:1727px;top:445px" width="11" height="9" viewBox="0 0 11 9"><g fill="none" stroke="#777" stroke-width="1.1"><path d="M1.2 1.8C3.8 1.8 4.5 3 6 4.5C7.5 6 8 7 9 7"/><path d="M1.2 7.2C3.8 7.2 4.5 6 6 4.5C7.5 3 8 2 9 2"/></g><g fill="#777"><path d="M8.2 0.1L10.9 2L8.2 3.9Z"/><path d="M8.2 5.1L10.9 7L8.2 8.9Z"/></g></svg>
<svg style="left:1755.5px;top:443px" width="9" height="13" viewBox="0 0 9 13"><path d="M2.5 11.5V2.3L0.3 5.5M4.7 1.2V10.6L7.6 6.9" fill="none" stroke="#777" stroke-width="1.15" stroke-linejoin="round"/></svg>

<div class="row" style="top:477px"><div class="tri"></div><div class="cb"></div><div class="cell" style="left:169px;letter-spacing:0px">32/1 166D/108F COOL COTTON YARN</div><div class="cell" style="left:655px">1</div><div class="cell" style="left:757px;letter-spacing:0.3px">1,29,510.00 kgs</div><div class="cell" style="left:993.5px;letter-spacing:0.25px">3,26,040.00 kgs</div><div class="cell" style="left:1230px;letter-spacing:0.3px">0.00 kgs</div></div>
<div class="row" style="top:520px"><div class="tri"></div><div class="cb"></div><div class="cell" style="left:169px;letter-spacing:-0.123px">40/1 SUPER COOL PHILLCOT YARN (132D/144)</div><div class="cell" style="left:655px">1</div><div class="cell" style="left:757px;letter-spacing:0.3px">29,092.46 kgs</div><div class="cell" style="left:993.5px;letter-spacing:0.25px">0.00 kgs</div><div class="cell" style="left:1230px;letter-spacing:0.3px">0.00 kgs</div></div>
<div class="row" style="top:563px"><div class="tri"></div><div class="cb"></div><div class="cell" style="left:169px;letter-spacing:0px">40/1 COOL COTTON YARN (132D/108F)</div><div class="cell" style="left:655px">1</div><div class="cell" style="left:757px;letter-spacing:0.3px">28,219.00 kgs</div><div class="cell" style="left:993.5px;letter-spacing:0.25px">2,04,000.00 kgs</div><div class="cell" style="left:1230px;letter-spacing:0.3px">0.00 kgs</div></div>
<div class="row" style="top:606px"><div class="tri"></div><div class="cb"></div><div class="cell" style="left:169px;letter-spacing:0.45px">D5162 145GSM 58-60''</div><div class="cell" style="left:655px">7</div><div class="cell" style="left:757px;letter-spacing:0.3px">23,894.90 m</div><div class="cell" style="left:993.5px;letter-spacing:0.25px">0.00 m</div><div class="cell" style="left:1230px;letter-spacing:0.3px">0.00 m</div></div>
<div class="row" style="top:649px"><div class="tri"></div><div class="cb"></div><div class="cell" style="left:169px;letter-spacing:0.18px">YTB-RTM 210-220 GSM</div><div class="cell" style="left:655px">9</div><div class="cell" style="left:757px;letter-spacing:0.3px">23,683.01 kgs</div><div class="cell" style="left:993.5px;letter-spacing:0.25px">1,077.40 kgs</div><div class="cell" style="left:1230px;letter-spacing:0.3px">0.00 kgs</div></div>
<div class="row" style="top:692px"><div class="tri"></div><div class="cb"></div><div class="cell" style="left:169px;letter-spacing:0.24px">2517 WOVEN 150 GSM 58&quot; SC25050601 CHART-A</div><div class="cell" style="left:655px">6</div><div class="cell" style="left:757px;letter-spacing:0.3px">21,714.50 m</div><div class="cell" style="left:993.5px;letter-spacing:0.25px">0.00 m</div><div class="cell" style="left:1230px;letter-spacing:0.3px">0.00 m</div></div>
<div class="row" style="top:735px"><div class="tri"></div><div class="cb"></div><div class="cell" style="left:169px;letter-spacing:-0.2px">40/1 POLY / VISCOSE 65/35 SIRO COMPACT YARN</div><div class="cell" style="left:655px">1</div><div class="cell" style="left:757px;letter-spacing:0.3px">20,730.80 kgs</div><div class="cell" style="left:993.5px;letter-spacing:0.25px">0.00 kgs</div><div class="cell" style="left:1230px;letter-spacing:0.3px">0.00 kgs</div></div>
<div class="row" style="top:778px"><div class="tri"></div><div class="cb"></div><div class="cell" style="left:169px;letter-spacing:-0.05px">40/1 COOL COTTON SD YARN (135D/108F)</div><div class="cell" style="left:655px">1</div><div class="cell" style="left:757px;letter-spacing:0.3px">20,400.00 kgs</div><div class="cell" style="left:993.5px;letter-spacing:0.25px">20,400.00 kgs</div><div class="cell" style="left:1230px;letter-spacing:0.3px">0.00 kgs</div></div>
<div class="row" style="top:821px"><div class="tri"></div><div class="cb"></div><div class="cell" style="left:169px;letter-spacing:0px">32/1 168D/108F SD COOL COTTON YARN</div><div class="cell" style="left:655px">1</div><div class="cell" style="left:757px;letter-spacing:0.3px">20,400.00 kgs</div><div class="cell" style="left:993.5px;letter-spacing:0.25px">0.00 kgs</div><div class="cell" style="left:1230px;letter-spacing:0.3px">0.00 kgs</div></div>
<div class="row" style="top:864px"><div class="tri"></div><div class="cb"></div><div class="cell" style="left:169px;letter-spacing:0px">2507 WOVEN 155 GSM (CHART-TIGC)</div><div class="cell" style="left:655px">2</div><div class="cell" style="left:757px;letter-spacing:0.3px">20,182.00 m</div><div class="cell" style="left:993.5px;letter-spacing:0.25px">0.00 m</div><div class="cell" style="left:1230px;letter-spacing:0.3px">0.00 m</div></div>
<div class="row" style="top:907px"><div class="tri"></div><div class="cb"></div><div class="cell" style="left:169px;letter-spacing:-0.185px">VISLONE 120D DTY YARN</div><div class="cell" style="left:655px">1</div><div class="cell" style="left:757px;letter-spacing:0.3px">18,942.50 kgs</div><div class="cell" style="left:993.5px;letter-spacing:0.25px">0.00 kgs</div><div class="cell" style="left:1230px;letter-spacing:0.3px">0.00 kgs</div></div>
<div class="row" style="top:950px"><div class="tri"></div><div class="cb"></div><div class="cell" style="left:169px;letter-spacing:0px">32/1 160D/168F DTY Fake Cotton Yarn</div><div class="cell" style="left:655px">1</div><div class="cell" style="left:757px;letter-spacing:0.3px">16,470.00 kgs</div><div class="cell" style="left:993.5px;letter-spacing:0.25px">0.00 kgs</div><div class="cell" style="left:1230px;letter-spacing:0.3px">0.00 kgs</div></div>
<div class="row" style="top:993px"><div class="tri"></div><div class="cb"></div><div class="cell" style="left:169px;letter-spacing:0px">40/1 100D/144F SD FAKE COTTON YARN</div><div class="cell" style="left:655px">1</div><div class="cell" style="left:757px;letter-spacing:0.3px">15,000.00 kgs</div><div class="cell" style="left:993.5px;letter-spacing:0.25px">0.00 kgs</div><div class="cell" style="left:1230px;letter-spacing:0.3px">0.00 kgs</div></div>

<!-- ================= TASKBAR ================= -->
<div class="a" style="left:0;top:1008px;width:1920px;height:72px;background:#1c1c1c;border-top:2px solid #383838"></div>
<!-- left widget -->
<div class="a" style="left:33px;top:1029px;width:30px;height:30px;border-radius:15px;background:linear-gradient(135deg,#f5c12a,#ef6a10)"></div>
<div class="a" style="left:47px;top:1018px;width:24px;height:24px;border-radius:12px;background:#f7a1ae"></div>
<div class="t" style="left:54px;top:1022px;font-size:16px;color:#111">3</div>
<!-- windows -->
<svg style="left:540px;top:1032px" width="24" height="24" viewBox="0 0 24 24"><g fill="#3cc2f6"><rect x="0" y="0" width="11.3" height="11.3" rx="1"/><rect x="12.7" y="0" width="11.3" height="11.3" rx="1"/><rect x="0" y="12.7" width="11.3" height="11.3" rx="1"/><rect x="12.7" y="12.7" width="11.3" height="11.3" rx="1"/></g></svg>
<svg style="left:589px;top:1032px" width="24" height="24" viewBox="0 0 24 24"><circle cx="10" cy="10" r="8.5" fill="#3a3a3a" stroke="#1f86d6" stroke-width="3"/><path d="M16 16L22 22" stroke="#1f86d6" stroke-width="3.2" stroke-linecap="round"/></svg>
<svg style="left:637px;top:1033px" width="24" height="23" viewBox="0 0 24 23"><rect x="0" y="6" width="18" height="17" rx="1.5" fill="#6a6a6a"/><rect x="6" y="0" width="18" height="16" rx="1.5" fill="#e8e8e8"/><rect x="6" y="6" width="12" height="10" fill="#a8a8a8"/></svg>
<svg style="left:686px;top:1033.5px" width="23" height="21" viewBox="0 0 23 21"><defs><linearGradient id="cpa" x1="0" y1="0" x2="0" y2="1"><stop offset="0" stop-color="#12a3f5"/><stop offset="0.55" stop-color="#5cc34a"/><stop offset="1" stop-color="#f5cc12"/></linearGradient><linearGradient id="cpb" x1="0" y1="0" x2="0.3" y2="1"><stop offset="0" stop-color="#b05cf0"/><stop offset="0.55" stop-color="#f0508a"/><stop offset="1" stop-color="#fba94a"/></linearGradient></defs><path d="M11 0.3H13.5C15 0.3 16.2 1.5 17 3.5L18 5.5H14C12.5 5.5 11.5 6 11 7Z" fill="#1763d6"/><path d="M6 15H9C10.5 15 11.3 14.5 11.8 13.5L12 15.5L11 19C10.5 20 10 20.5 9 20.5H8C7 20.5 6.5 19.5 6.2 18.5Z" fill="#f0602a"/><path d="M5 0.3H13.5C15 0.3 16 1.5 15.5 3L12 13C11.5 14.3 10.5 15 9 15H2C0.8 15 0 14 0.3 12.5L2.5 3C3 1.3 4 0.3 5 0.3Z" fill="url(#cpa)"/><path d="M14 5.5H20.5C22 5.5 22.8 6.5 22.5 8L20 18C19.5 19.8 18.5 20.5 17 20.5H9C7.8 20.5 7 19.5 7.4 18.2L10.5 7.5C11 6.2 12.5 5.5 14 5.5Z" fill="url(#cpb)"/></svg>
<svg style="left:733px;top:1032px" width="23" height="24" viewBox="0 0 23 24"><circle cx="9.5" cy="4" r="3.5" fill="#7b83eb"/><circle cx="18.5" cy="6" r="2.8" fill="#7b83eb"/><rect x="12" y="10" width="11" height="13" rx="4" fill="#5b5fc7"/><rect x="4" y="8.5" width="12" height="15" rx="4" fill="#7b83eb"/><rect x="0" y="12" width="10" height="10" rx="1.5" fill="#4b53bc"/><path d="M2.5 14.5H7.5M5 14.5V20" stroke="#fff" stroke-width="1.6"/></svg>
<svg style="left:781px;top:1034px" width="24" height="21" viewBox="0 0 24 21"><path d="M0 1.5A1.5 1.5 0 0 1 1.5 0H8L10 2H22.5A1.5 1.5 0 0 1 24 3.5V21H0Z" fill="#e8b000"/><path d="M0 4H24V21H0Z" fill="#ffd451"/><rect x="4" y="15" width="16" height="6" rx="2" fill="#1e78d6"/><path d="M8 17.5H16" stroke="#8fd0ff" stroke-width="1.2"/></svg>
<div class="dot" style="left:790px"></div>
<svg style="left:829px;top:1032px" width="24" height="24" viewBox="0 0 24 24"><path d="M7 5V2.5A2 2 0 0 1 9 0.8H15A2 2 0 0 1 17 2.5V5" fill="none" stroke="#38b6e8" stroke-width="1.8"/><rect x="0" y="4.5" width="24" height="19.5" rx="3" fill="#f2f2f2"/><rect x="7" y="10" width="4.5" height="4.5" fill="#f25022"/><rect x="12.5" y="10" width="4.5" height="4.5" fill="#7fba00"/><rect x="7" y="15.5" width="4.5" height="4.5" fill="#00a4ef"/><rect x="12.5" y="15.5" width="4.5" height="4.5" fill="#ffb900"/></svg>
<svg style="left:878px;top:1033px" width="22" height="22" viewBox="0 0 22 22"><rect x="1" y="1" width="20" height="20" rx="4" fill="#050505" stroke="#c85bb0" stroke-width="1.6"/><path d="M1 12V17A4 4 0 0 0 5 21H17A4 4 0 0 0 21 17V12" fill="none" stroke="#d49a4a" stroke-width="1.6"/><path d="M6 5L4.5 8H6.5L5 11" fill="none" stroke="#fff" stroke-width="1"/><path d="M9 10H12" stroke="#fff" stroke-width="1.2"/></svg>
<svg style="left:925px;top:1032px" width="24" height="24" viewBox="0 0 24 24"><circle cx="12" cy="12" r="12" fill="#ef6c33"/><path d="M5 19L15 9L17 7A2 2 0 0 1 19 8" fill="none" stroke="#fff" stroke-width="2"/></svg>
<svg style="left:973px;top:1032px" width="24" height="24" viewBox="0 0 24 24"><g stroke="#d97757" stroke-width="2" stroke-linecap="round"><path d="M12 1V23"/><path d="M1 12H23"/><path d="M4 4L20 20"/><path d="M20 4L4 20"/><path d="M7 2L17 22"/><path d="M17 2L7 22"/><path d="M2 7L22 17"/><path d="M22 7L2 17"/></g></svg>
<div class="dot" style="left:982px"></div>
<svg style="left:1021px;top:1032px" width="24" height="24" viewBox="0 0 24 24"><path d="M17 0.5L24 3.5V20.5L17 23.5L6 13.5L2.5 16.5L0 15V9L2.5 7.5L6 10.5Z" fill="#1f9cf0"/><path d="M17 6V18L9.5 12Z" fill="#1c1c1c"/><path d="M17 0.5L24 3.5V20.5L17 23.5Z" fill="#0065a9"/></svg>
<svg style="left:1068px;top:1032px" width="24" height="24" viewBox="0 0 24 24"><rect x="0" y="0" width="24" height="24" rx="5" fill="#222"/><rect x="7" y="3" width="5" height="6" rx="2.5" fill="#f24e1e"/><rect x="12" y="3" width="5" height="6" rx="2.5" fill="#ff7262"/><rect x="7" y="9" width="5" height="6" rx="2.5" fill="#a259ff"/><circle cx="14.5" cy="12" r="2.6" fill="#1abcfe"/><rect x="7" y="15" width="5" height="6" rx="2.5" fill="#0acf83"/></svg>
<div class="dot" style="left:1077px"></div>
<!-- chrome icons -->
<svg style="left:1116px;top:1031px" width="32" height="30" viewBox="0 0 32 30"><circle cx="12" cy="14" r="12" fill="#34a853"/><path d="M12 2A12 12 0 0 1 22.4 8H12Z M1.6 8A12 12 0 0 1 12 2V8Z" fill="#ea4335"/><path d="M22.4 8A12 12 0 0 1 12 26L17 17Z" fill="#fbbc04"/><circle cx="12" cy="14" r="5.5" fill="#fff"/><circle cx="12" cy="14" r="4.3" fill="#4285f4"/><circle cx="18" cy="8" r="5" fill="#7cb342"/><text x="16" y="10.5" font-size="6" fill="#fff" font-family="Liberation Sans">P</text><circle cx="26" cy="-2" r="3" fill="#4cc2ff"/></svg>
<div class="dot" style="left:1126px"></div>
<svg style="left:1164px;top:1031px" width="32" height="30" viewBox="0 0 32 30"><circle cx="12" cy="14" r="12" fill="#34a853"/><path d="M12 2A12 12 0 0 1 22.4 8H12Z M1.6 8A12 12 0 0 1 12 2V8Z" fill="#ea4335"/><path d="M22.4 8A12 12 0 0 1 12 26L17 17Z" fill="#fbbc04"/><circle cx="12" cy="14" r="5.5" fill="#fff"/><circle cx="12" cy="14" r="4.3" fill="#4285f4"/><circle cx="18" cy="8" r="5" fill="#6b4c3b"/><text x="16" y="10.5" font-size="6" fill="#fff" font-family="Liberation Sans">d</text><circle cx="26" cy="-2" r="3" fill="#4cc2ff"/></svg>
<div class="dot" style="left:1174px"></div>
<div class="a" style="left:1204px;top:1014px;width:42px;height:60px;background:#2a2a2a;border-radius:6px;border:1px solid #333"></div>
<svg style="left:1213px;top:1031px" width="32" height="30" viewBox="0 0 32 30"><circle cx="12" cy="14" r="12" fill="#34a853"/><path d="M12 2A12 12 0 0 1 22.4 8H12Z M1.6 8A12 12 0 0 1 12 2V8Z" fill="#ea4335"/><path d="M22.4 8A12 12 0 0 1 12 26L17 17Z" fill="#fbbc04"/><circle cx="12" cy="14" r="5.5" fill="#fff"/><circle cx="12" cy="14" r="4.3" fill="#4285f4"/><circle cx="18" cy="8" r="5.5" fill="#fff"/><rect x="15" y="6" width="6" height="1.5" fill="#1a0c4a"/><rect x="15" y="8" width="6" height="2" fill="#e4003f"/><circle cx="26" cy="-2" r="3" fill="#4cc2ff"/></svg>
<div class="a" style="left:1217px;top:1068px;width:16px;height:4px;border-radius:2px;background:#4cc2ff"></div>
<svg style="left:1262px;top:1030px" width="30" height="28" viewBox="0 0 30 28"><path d="M12 4A11 11 0 1 1 5 24L0.5 25.5L2 21A11 11 0 0 1 12 4Z" fill="none" stroke="#25d366" stroke-width="2.4"/><path d="M7.5 11C8 15 11 18.5 15.5 19.5L16.5 17.5L14 16L12.5 17C11 16 10 15 9.5 13.5L10.5 12L9 9.5Z" fill="#25d366"/><circle cx="25" cy="-2" r="3" fill="#4cc2ff"/></svg>
<div class="dot" style="left:1270px"></div>
<svg style="left:1309px;top:1032px" width="25" height="25" viewBox="0 0 25 25"><rect x="0" y="0" width="18" height="17" rx="2" fill="#ececec"/><path d="M3 14V3H14" fill="none" stroke="#e03a2a" stroke-width="2.4" stroke-dasharray="2.5 1.5"/><circle cx="14" cy="22" r="2" fill="none" stroke="#2aa3e8" stroke-width="1.5"/><circle cx="23" cy="13" r="2" fill="none" stroke="#2aa3e8" stroke-width="1.5"/><path d="M14 9L15 20M12 15L21.5 13.5" stroke="#888" stroke-width="1.5"/></svg>
<div class="dot" style="left:1318px"></div>
<svg style="left:1357px;top:1034px" width="21" height="21" viewBox="0 0 21 21"><rect x="0" y="0" width="21" height="21" rx="4" fill="#2a0e8a"/><path d="M14.5 6.5A5 5 0 1 0 15 12H11" fill="none" stroke="#fff" stroke-width="2.6"/><circle cx="4" cy="4" r="0.7" fill="#fff"/><circle cx="17" cy="5" r="0.7" fill="#fff"/></svg>
<div class="dot" style="left:1366px"></div>
<!-- tray -->
<svg style="left:1512px;top:1038px" width="18" height="10" viewBox="0 0 18 10"><path d="M1 9L9 1.5L17 9" fill="none" stroke="#eee" stroke-width="1.8"/></svg>
<svg style="left:1560px;top:1032px" width="18" height="26" viewBox="0 0 18 26"><rect x="5" y="1" width="8" height="15" rx="4" fill="none" stroke="#6bc7ef" stroke-width="1.8"/><path d="M1.5 12A7.5 7.5 0 0 0 16.5 12M9 19.5V25" fill="none" stroke="#6bc7ef" stroke-width="1.8"/></svg>
<div class="t" style="left:1608px;top:1026px;font-size:17px;color:#f0f0f0;letter-spacing:-0.3px">ENG</div>
<div class="t" style="left:1617px;top:1049px;font-size:17px;color:#f0f0f0">IN</div>
<svg style="left:1670px;top:1034px" width="25" height="20" viewBox="0 0 25 20"><g fill="none" stroke="#f0f0f0" stroke-width="1.8"><path d="M1 6.5A16 16 0 0 1 24 6.5"/><path d="M4.5 10A11 11 0 0 1 20.5 10"/><path d="M8 13.5A6 6 0 0 1 17 13.5"/></g><circle cx="12.5" cy="17.5" r="2" fill="#f0f0f0"/></svg>
<svg style="left:1706px;top:1033px" width="26" height="22" viewBox="0 0 26 22"><path d="M1 7H5L11 2V20L5 15H1Z" fill="none" stroke="#f0f0f0" stroke-width="1.6" stroke-linejoin="round"/><path d="M14 7.5A5 5 0 0 1 14 14.5" fill="none" stroke="#f0f0f0" stroke-width="1.6"/><path d="M17.5 4A10 10 0 0 1 17.5 18" fill="none" stroke="#888" stroke-width="1.6"/></svg>
<svg style="left:1743px;top:1032px" width="31" height="21" viewBox="0 0 31 21"><rect x="1" y="5" width="26" height="15" rx="3.5" fill="#8fd694" stroke="#f0f0f0" stroke-width="1.8"/><rect x="27" y="9" width="3" height="7" rx="1" fill="#f0f0f0"/><path d="M15 0L10 10H14L12.5 16L18 7H14.5Z" fill="#f0f0f0" stroke="#1c1c1c" stroke-width="1"/></svg>
<div class="t" style="left:1849px;top:1023px;font-size:18px;color:#f5f5f5;letter-spacing:-0.4px">16:36</div>
<div class="t" style="left:1798px;top:1047px;font-size:18px;color:#f5f5f5;letter-spacing:0.1px">20-04-2026</div>
<div class="a" style="left:1842px;top:1042px;width:236px;height:236px;border-radius:118px;background:#000"></div>



</body></html>
